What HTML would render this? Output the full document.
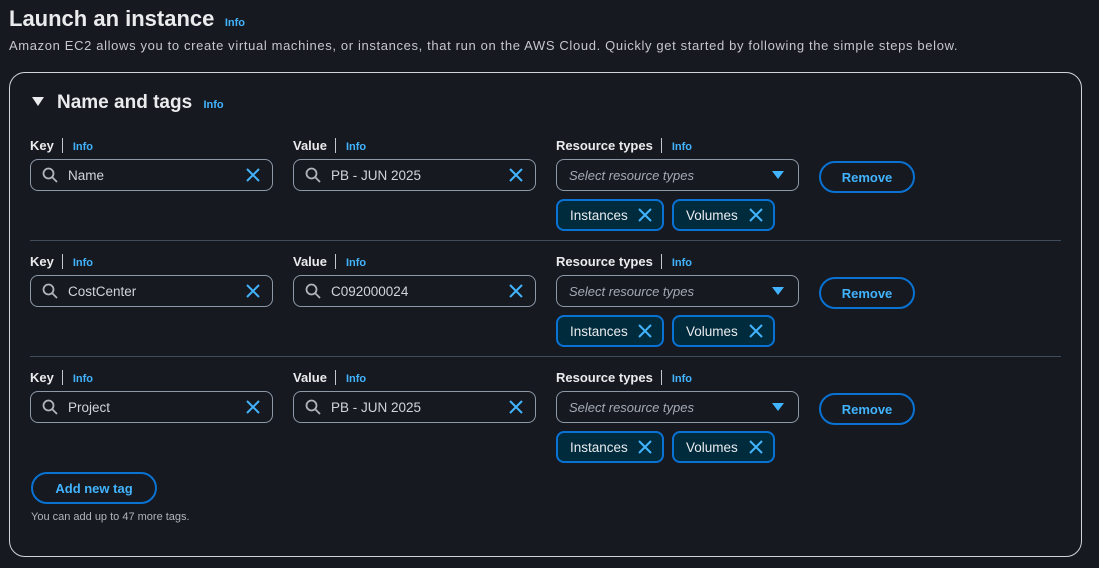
<!DOCTYPE html>
<html><head><meta charset="utf-8"><style>
*{box-sizing:border-box;margin:0;padding:0}
body{width:1099px;height:568px;background:#16191f;color:#d1d5db;font-family:"Liberation Sans",sans-serif;position:relative;overflow:hidden}
.a{position:absolute;white-space:nowrap}
.info{color:#42b4ff;font-weight:bold;font-size:11px}
h1{font-size:22px;font-weight:bold;color:#e9ebed}
.lbl{font-size:13px;font-weight:bold;color:#e9ebed}
.sep{display:inline-block;width:1px;height:15px;background:#c6c6cd;vertical-align:-3px;margin:0 10px 0 8px}
.inp{height:32px;border:1px solid #8d99a8;border-radius:8px;font-size:13.5px;color:#d1d5db;display:flex;align-items:center}
.btn{border:2px solid #0972d3;border-radius:20px;color:#42b4ff;font-weight:bold;font-size:13px;display:flex;align-items:center;justify-content:center}
.tok{height:32px;border:2px solid #0972d3;border-radius:8px;background:#002b3d;color:#e9ebed;font-size:13.5px;display:flex;align-items:center;padding-left:12px}
.div{height:1px;background:#414d5c}
</style></head><body>
<div class="a" style="left:9px;top:6px"><h1 style="display:inline">Launch an instance</h1> <span class="info" style="margin-left:6px">Info</span></div>
<div class="a" style="left:9px;top:38px;font-size:13px;letter-spacing:0.64px;color:#c6c6cd">Amazon EC2 allows you to create virtual machines, or instances, that run on the AWS Cloud. Quickly get started by following the simple steps below.</div>
<div class="a" style="left:9px;top:72px;width:1073px;height:485px;border:1px solid #d1d5db;border-radius:16px"></div>
<svg class="a" style="left:31px;top:96px" width="14" height="11"><path d="M1 1h12L7 10z" fill="#e9ebed"/></svg>
<div class="a" style="left:57px;top:92px;font-size:19px;font-weight:bold;color:#e9ebed">Name and tags <span class="info" style="margin-left:6px">Info</span></div>
<div id="rows"></div>
<div class="a btn" style="left:31px;top:472px;width:126px;height:32px">Add new tag</div>
<div class="a" style="left:31px;top:511px;font-size:11px;color:#b0b5bb">You can add up to 47 more tags.</div>
<script>
var data=[["Name","PB - JUN 2025"],["CostCenter","C092000024"],["Project","PB - JUN 2025"]];
var s="";
var mag='<svg width="16" height="16" style="margin:0 10px 0 11px"><circle cx="6.5" cy="6.5" r="5" fill="none" stroke="#b0b5bb" stroke-width="1.8"/><path d="M10 10l5 5" stroke="#b0b5bb" stroke-width="1.8"/></svg>';
var x='<svg width="14" height="14"><path d="M1 1l12 12M13 1L1 13" stroke="#42b4ff" stroke-width="2"/></svg>';
data.forEach(function(d,i){var y=i*116;
s+='<div class="a lbl" style="left:30px;top:'+(138+y)+'px">Key<span class="sep"></span><span class="info">Info</span></div>';
s+='<div class="a lbl" style="left:293px;top:'+(138+y)+'px">Value<span class="sep"></span><span class="info">Info</span></div>';
s+='<div class="a lbl" style="left:556px;top:'+(138+y)+'px">Resource types<span class="sep"></span><span class="info">Info</span></div>';
s+='<div class="a inp" style="left:30px;top:'+(159+y)+'px;width:243px">'+mag+d[0]+'<span style="margin-left:auto;margin-right:12px;display:flex">'+x+'</span></div>';
s+='<div class="a inp" style="left:293px;top:'+(159+y)+'px;width:243px">'+mag+d[1]+'<span style="margin-left:auto;margin-right:12px;display:flex">'+x+'</span></div>';
s+='<div class="a inp" style="left:556px;top:'+(159+y)+'px;width:243px;padding-left:12px;font-style:italic;color:#a4abb5;font-size:13px">Select resource types<svg style="margin-left:auto;margin-right:14px" width="12" height="9"><path d="M0 0h12L6 8z" fill="#42b4ff"/></svg></div>';
s+='<div class="a btn" style="left:819px;top:'+(161+y)+'px;width:96px;height:32px">Remove</div>';
s+='<div class="a tok" style="left:556px;top:'+(199+y)+'px;width:108px">Instances<span style="margin-left:auto;margin-right:10px;display:flex">'+x+'</span></div>';
s+='<div class="a tok" style="left:672px;top:'+(199+y)+'px;width:103px">Volumes<span style="margin-left:auto;margin-right:10px;display:flex">'+x+'</span></div>';
if(i<2)s+='<div class="a div" style="left:30px;top:'+(240+y)+'px;width:1031px"></div>';
});
document.getElementById("rows").innerHTML=s;
</script>
</body></html>
